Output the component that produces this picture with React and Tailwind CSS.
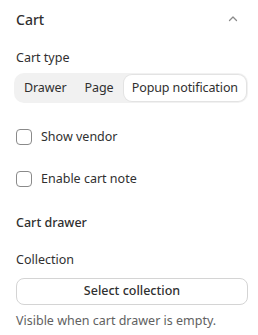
import React, { useState } from "react";

const font = { fontFamily: '"Noto Sans", "Open Sans", sans-serif' };

const Checkbox = ({ label }) => {
  const [on, setOn] = useState(false);
  return (
    <label className="flex items-center gap-[9px] h-5 cursor-pointer">
      <span
        onClick={() => setOn(!on)}
        className={`w-4 h-4 rounded-[4px] border ${on ? "bg-[#303030] border-[#303030]" : "border-[#8a8a8a] bg-white"}`}
      ></span>
      <span className="text-[12.5px] text-[#303030]">{label}</span>
    </label>
  );
};

const App = () => {
  const [type, setType] = useState("Popup notification");
  const types = ["Drawer", "Page", "Popup notification"];

  return (
    <div className="w-[258px] h-[335px] bg-white px-4 overflow-hidden" style={font}>
      {/* Header */}
      <div className="flex items-center justify-between h-5 mt-[9px]">
        <h2 className="text-[14px] font-medium text-[#303030]">Cart</h2>
        <svg width="12" height="12" viewBox="0 0 12 12" className="mr-[3px]">
          <path d="M2.5 7.5 6 4l3.5 3.5" fill="none" stroke="#8a8a8a" strokeWidth="1.3" strokeLinecap="round" strokeLinejoin="round" />
        </svg>
      </div>

      <p className="text-[12.5px] text-[#303030] h-5 leading-5 mt-[19px]">Cart type</p>

      {/* Segmented control */}
      <div className="mt-[5px] -ml-[2px] w-[234px] h-[30px] bg-[#f1f1f1] rounded-[10px] p-[2px] flex items-stretch">
        {types.map((t) => (
          <button
            key={t}
            onClick={() => setType(t)}
            className={`px-[8px] text-[12.5px] tracking-[-0.1px] text-[#303030] rounded-[8px] whitespace-nowrap ${
              type === t ? "bg-white shadow-[0_0_0_1px_#e3e3e3] ml-auto" : ""
            } ${t === "Page" ? "ml-[2px]" : ""}`}
          >
            {t}
          </button>
        ))}
      </div>

      <div className="mt-[24px] flex flex-col gap-[22px]">
        <Checkbox label="Show vendor" />
        <Checkbox label="Enable cart note" />
      </div>

      <h3 className="text-[12.5px] font-medium text-[#303030] h-5 leading-5 mt-[24px]">Cart drawer</h3>

      <p className="text-[12.5px] text-[#303030] h-5 leading-5 mt-[17px]">Collection</p>

      <button className="mt-2 w-[232px] h-[27px] rounded-[8px] border border-[#d4d4d4] text-[12.5px] font-medium text-[#303030] bg-white">
        Select collection
      </button>

      <p className="text-[12.5px] text-[#616161] h-5 leading-5 mt-[6px]">Visible when cart drawer is empty.</p>
    </div>
  );
};

export default App;
